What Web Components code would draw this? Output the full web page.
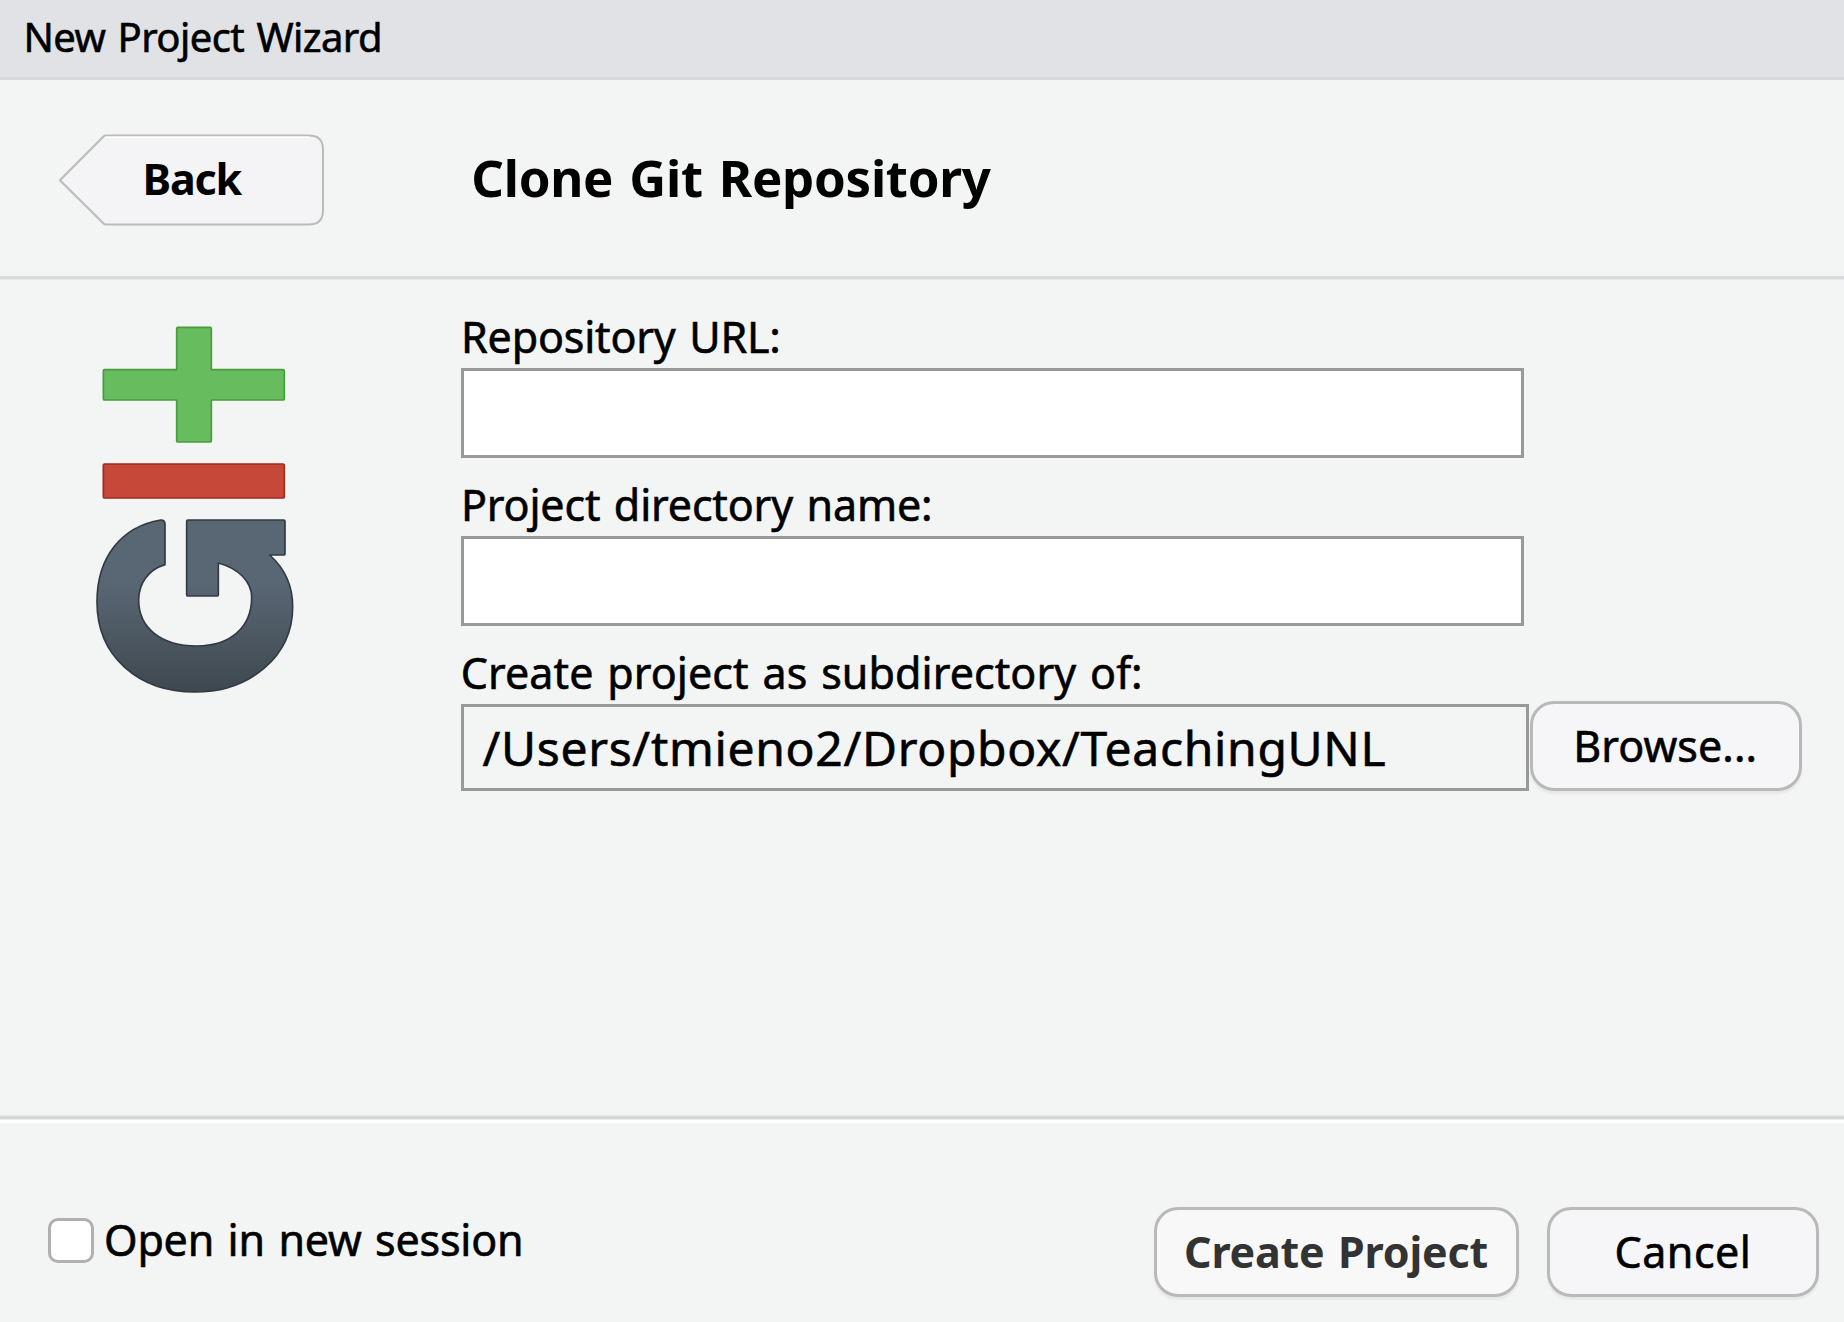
<!DOCTYPE html>
<html lang="en">
<head>
<meta charset="utf-8">
<title>New Project Wizard</title>
<style>
  html, body { margin: 0; height: 100%; overflow: hidden; background: #f3f5f4; }
  body { font-family: "Noto Sans", "Open Sans", sans-serif; color: #000; }
</style>
</head>
<body>
<project-wizard></project-wizard>
<script>
// Single line of text tracked out so that its ink spans `span` pixels.
class TrackedText extends HTMLElement {
  connectedCallback() {
    const root = this.attachShadow({ mode: 'open' });
    root.innerHTML = '<style>:host{display:block;white-space:nowrap;word-spacing:.06em}</style><slot></slot>';
    const text = this.textContent;
    const cs = getComputedStyle(this);
    const ctx = document.createElement('canvas').getContext('2d');
    ctx.font = `${cs.fontWeight} ${cs.fontSize} ${cs.fontFamily}`;
    const m = ctx.measureText(text);
    const gaps = text.split(' ').length - 1;
    const ink = m.actualBoundingBoxLeft + m.actualBoundingBoxRight + gaps * 0.06 * parseFloat(cs.fontSize);
    this.style.letterSpacing = (Number(this.getAttribute('span')) - ink) / (text.length - 1) + 'px';
    this.style.marginLeft = m.actualBoundingBoxLeft + 'px';
    if (Number(cs.fontWeight) < 600) this.style.webkitTextStroke = '0.6px currentColor';
  }
}

class BackButton extends HTMLElement {
  connectedCallback() {
    this.attachShadow({ mode: 'open' }).innerHTML = `
      <style>
        :host { display: grid; width: 266px; height: 93px; font-size: 43px; font-weight: 700; line-height: 90.6px; }
        svg, div { grid-area: 1 / 1; }
        div { padding-left: 86.5px; }
      </style>
      <svg width="266" height="93" viewBox="0 0 266 93">
        <path d="M.9 46.3 44.8 2.2Q45.5 1.5 46.5 1.5H250Q264 1.5 264 15.5V76.5Q264 90.5 250 90.5H46.5Q45.5 90.5 44.8 89.8Z" fill="#f4f4f6" stroke="#babbbc" stroke-width="2"/>
        <path d="M46 3.2H250" stroke="#fff" stroke-width="1.4"/>
      </svg>
      <div><slot></slot></div>`;
  }
}

class PushButton extends HTMLElement {
  connectedCallback() {
    this.attachShadow({ mode: 'open' }).innerHTML = `
      <style>
        :host { display: block; box-sizing: border-box; flex: none; height: 90px; border: 3px solid #b9b9b9; border-radius: 24px;
          background: #f6f6f9; box-shadow: 0 3px 2px rgba(0,0,0,.05); font-size: 43px; line-height: 84.6px; }
        :host([primary]) { background: #f8f8f8; color: #333; font-weight: 700; }
      </style><slot></slot>`;
  }
}

class FormField extends HTMLElement {
  connectedCallback() {
    this.attachShadow({ mode: 'open' }).innerHTML = `
      <style>
        :host { display: block; font-size: 43px; }
        .label { height: 48px; line-height: 33px; }
        .row { display: flex; align-items: flex-start; }
        .box { box-sizing: border-box; flex: none; width: 1063px; height: 90px; border: 3px solid #999; background: #fff; }
        :host([readonly]) .box { width: 1068px; height: 87px; background: #f3f5f4; padding-left: 18.5px; font-size: 48px; line-height: 81px; }
        ::slotted(push-button) { margin: -3px 0 0 1px; }
      </style>
      <div class="label"><slot name="label"></slot></div>
      <div class="row"><div class="box"><slot></slot></div><slot name="action"></slot></div>`;
  }
}

class GitLogo extends HTMLElement {
  connectedCallback() {
    this.attachShadow({ mode: 'open' }).innerHTML = `
      <style>:host { display: block; } svg { display: block; }</style>
      <svg width="230" height="400" viewBox="0 0 690 1200" stroke-width="5" stroke-linejoin="round">
        <defs><linearGradient id="g" gradientUnits="userSpaceOnUse" x1="0" y1="629" x2="0" y2="1146">
          <stop offset="0" stop-color="#596673"/><stop offset=".37" stop-color="#596673"/><stop offset="1" stop-color="#3e484f"/>
        </linearGradient></defs>
        <path d="M294 52H390Q394 52 394 56V179H609Q613 179 613 183V266Q613 270 609 270H394V392Q394 396 390 396H294Q290 396 290 392V270H74Q70 270 70 266V183Q70 179 74 179H290V56Q290 52 294 52Z" fill="#67bd5d" stroke="#4b9a3d"/>
        <rect x="70" y="462" width="543" height="102" rx="4" fill="#c64839" stroke="#a4281d"/>
        <path d="M242 630Q255 629 255 643V764C205 779 176 820 176 870C176 955 245 1008 350 1008C452 1008 515 952 515 862C515 815 475 775 415 759V854Q415 858 411 858H324Q320 858 320 854V634Q320 630 324 630H611Q615 630 615 634V731Q615 735 611 735H569C614 775 638 830 638 890C638 1039 510 1146 345 1146C175 1146 51 1039 51 876C51 740 125 650 242 630Z" fill="url(#g)" stroke="#323b43"/>
      </svg>`;
  }
}

class CheckOption extends HTMLElement {
  connectedCallback() {
    this.attachShadow({ mode: 'open' }).innerHTML = `
      <style>
        :host { display: flex; gap: 12px; font-size: 43px; line-height: 43px; }
        i { box-sizing: border-box; width: 46px; height: 45px; border: 3px solid #b0b0b0; border-radius: 10px; background: #fff; }
      </style><i></i><slot></slot>`;
  }
}

class ProjectWizard extends HTMLElement {
  connectedCallback() {
    this.attachShadow({ mode: 'open' }).innerHTML = `
      <style>
        :host { display: flex; flex-direction: column; width: 1844px; height: 1322px; background: #f3f5f4; overflow: hidden; }
        .title { box-sizing: border-box; height: 80px; padding-left: 26.5px; background: #e1e2e6; border-bottom: 3px solid #d7d9dd; font-size: 40px; line-height: 73px; }
        header { display: flex; align-items: flex-start; height: 196px; padding-left: 59px; }
        back-button { margin-top: 54px; }
        h1 { margin: 0 0 0 148.3px; font-size: 51px; font-weight: 700; line-height: 195px; }
        .rule { height: 4px; background: linear-gradient(#d7d9dc 0 60%, #eceeee); }
        main { display: flex; align-items: flex-start; height: 835px; padding-left: 80px; }
        git-logo { margin-top: 30px; }
        .form { display: flex; flex-direction: column; gap: 30px; margin: 40px 0 0 151px; }
        .base { height: 5px; background: linear-gradient(#e6e8e7 0 20%, #d3d4d3 35% 65%, #e2e4e3 80%, #f4f5f5); }
        footer { display: flex; align-items: flex-start; border-top: 3px solid #fff; height: 199px; padding: 0 25px 0 48px; }
        check-option { margin: 95px auto 0 0; }
        footer push-button { margin-top: 84px; }
      </style>
      <div class="title"><tracked-text span="353.5">New Project Wizard</tracked-text></div>
      <header>
        <back-button><tracked-text span="97">Back</tracked-text></back-button>
        <h1><tracked-text span="518.5">Clone Git Repository</tracked-text></h1>
      </header>
      <div class="rule"></div>
      <main>
        <git-logo></git-logo>
        <div class="form">
          <form-field><tracked-text slot="label" style="padding-left:4px" span="313.3">Repository URL:</tracked-text></form-field>
          <form-field><tracked-text slot="label" style="padding-left:4px" span="465">Project directory name:</tracked-text></form-field>
          <form-field readonly>
            <tracked-text slot="label" style="padding-left:1.8px" span="677.2">Create project as subdirectory of:</tracked-text>
            <tracked-text span="902">/Users/tmieno2/Dropbox/TeachingUNL</tracked-text>
            <push-button slot="action" style="width:272px"><tracked-text style="padding-left:44.3px" span="177.2">Browse...</tracked-text></push-button>
          </form-field>
        </div>
      </main>
      <div class="base"></div>
      <footer>
        <check-option><tracked-text span="415">Open in new session</tracked-text></check-option>
        <push-button primary style="width:365px"><tracked-text style="padding-left:29px" span="301.5">Create Project</tracked-text></push-button>
        <push-button style="width:272px;margin-left:28px"><tracked-text style="padding-left:66.6px" span="131.2">Cancel</tracked-text></push-button>
      </footer>`;
  }
}

customElements.define('back-button', BackButton);
customElements.define('push-button', PushButton);
customElements.define('form-field', FormField);
customElements.define('git-logo', GitLogo);
customElements.define('check-option', CheckOption);
customElements.define('project-wizard', ProjectWizard);
customElements.define('tracked-text', TrackedText);
</script>
</body>
</html>
